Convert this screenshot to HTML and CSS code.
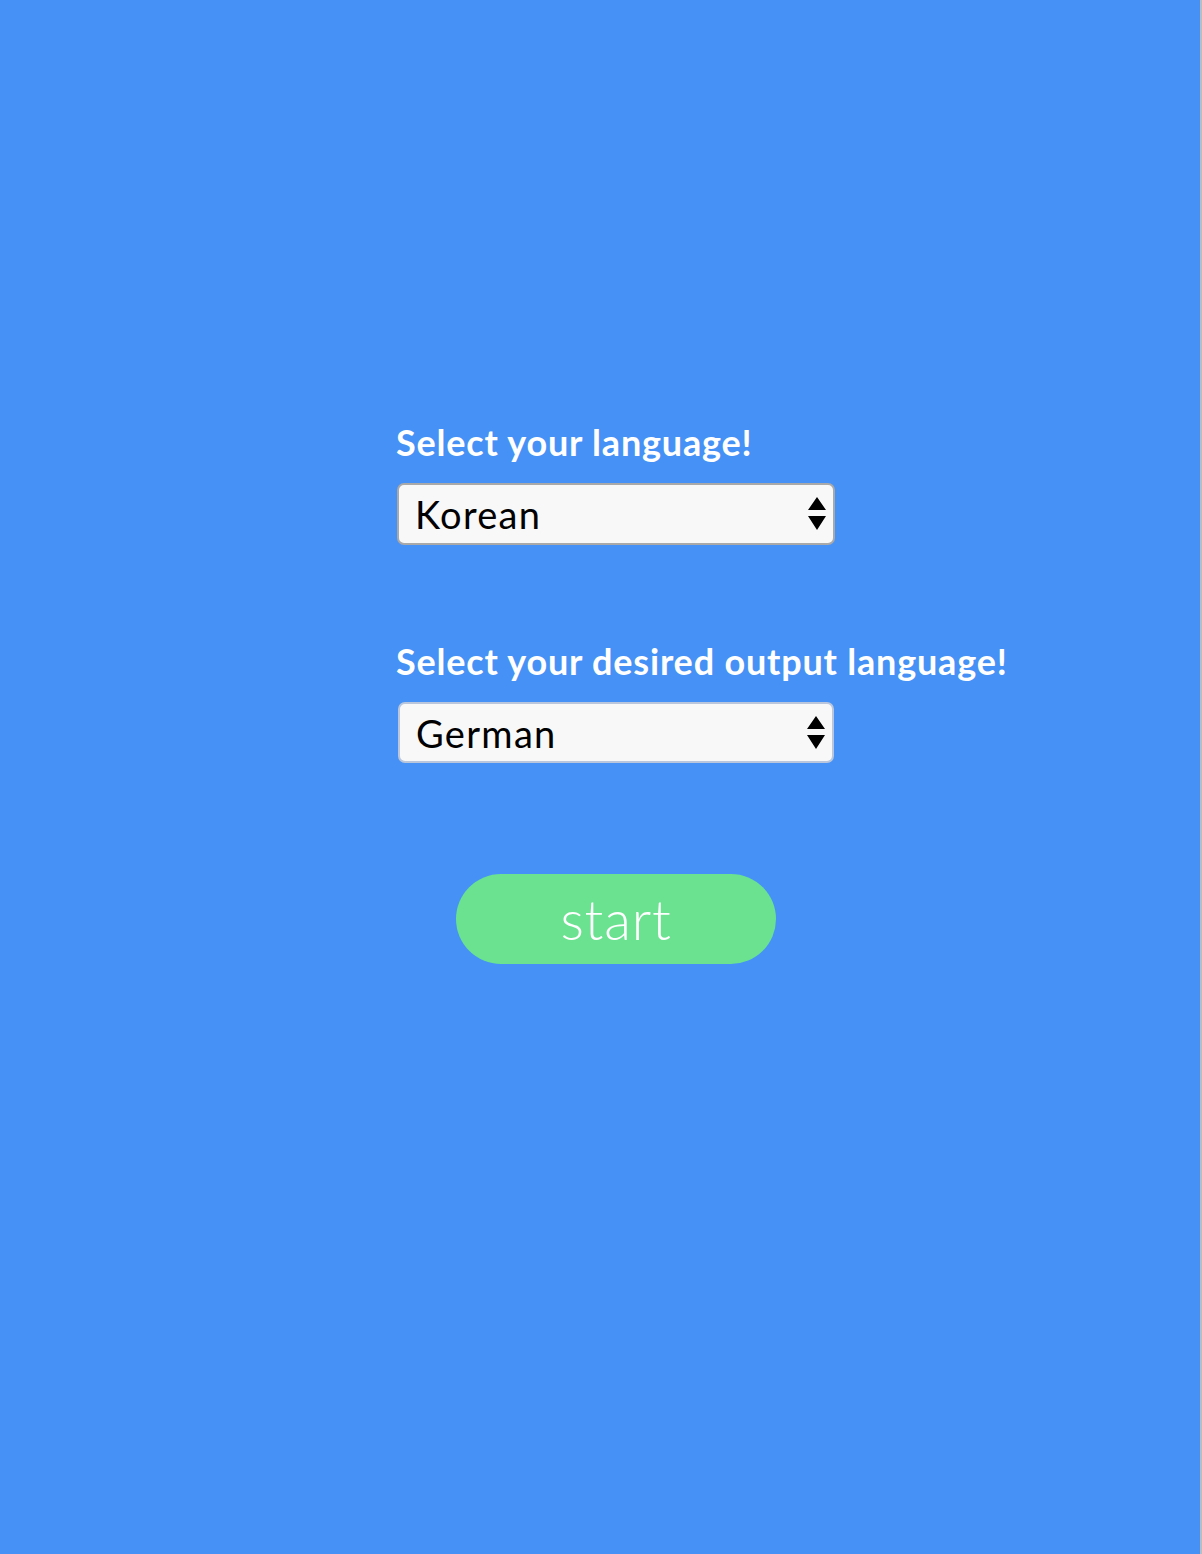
FILE: index.html
```html
<!DOCTYPE html>
<html lang="en">
<head>
<meta charset="utf-8">
<title>Language select</title>
<link rel="stylesheet" href="styles.css">
</head>
<body>
<main class="page">
  <form class="form">
    <label class="label">Select your language!</label>
    <div class="select">
      <span class="value">Korean</span>
      <svg class="arrows" width="20" height="36" viewBox="0 0 20 36"><path d="M10 1 L19 14 L1 14 Z M1 20 L19 20 L10 34 Z" fill="#000"/></svg>
    </div>
    <label class="label label-2">Select your desired output language!</label>
    <div class="select select-focus">
      <span class="value">German</span>
      <svg class="arrows" width="20" height="36" viewBox="0 0 20 36"><path d="M10 1 L19 14 L1 14 Z M1 20 L19 20 L10 34 Z" fill="#000"/></svg>
    </div>
    <div class="actions">
      <button type="button" class="start">start</button>
    </div>
  </form>
</main>
</body>
</html>
```
FILE: styles.css
```css
html, body {
  margin: 0;
  padding: 0;
}
body {
  background: #4591f6;
  font-family: Lato, "Noto Sans", sans-serif;
}
.page {
  min-height: 1554px;
  box-sizing: border-box;
  border-right: 2px solid #b9bcc2;
  padding-top: 420px;
}
.form {
  margin-left: 396px;
  width: 440px;
  display: flex;
  flex-direction: column;
}
.label {
  color: #fff;
  font-weight: 700;
  font-size: 36px;
  line-height: 44px;
  white-space: nowrap;
  letter-spacing: 0.8px;
}
.label-2 {
  margin-top: 94px;
}
.select {
  margin-top: 19px;
  margin-left: 1px;
  width: 438px;
  height: 62px;
  box-sizing: border-box;
  background: #f8f8f8;
  border: 2px solid #a9a9a9;
  border-radius: 7px;
  display: flex;
  align-items: center;
  justify-content: space-between;
  padding: 0 6px 0 16px;
}
.select-focus {
  border-color: #b9c6db;
  width: 436px;
  margin-left: 2px;
  height: 61px;
}
.value {
  font-size: 38px;
  color: #000;
  font-family: Lato, sans-serif;
  font-weight: 400;
  letter-spacing: 1.3px;
}
.arrows {
  display: block;
}
.actions {
  margin-top: 111px;
  padding-left: 60px;
}
.start {
  width: 320px;
  height: 90px;
  border: none;
  border-radius: 45px;
  background: #6ae290;
  color: #fff;
  font-family: Lato, sans-serif;
  font-weight: 300;
  font-size: 55px;
  letter-spacing: 0.8px;
  padding: 0;
  line-height: 86px;
}
```
